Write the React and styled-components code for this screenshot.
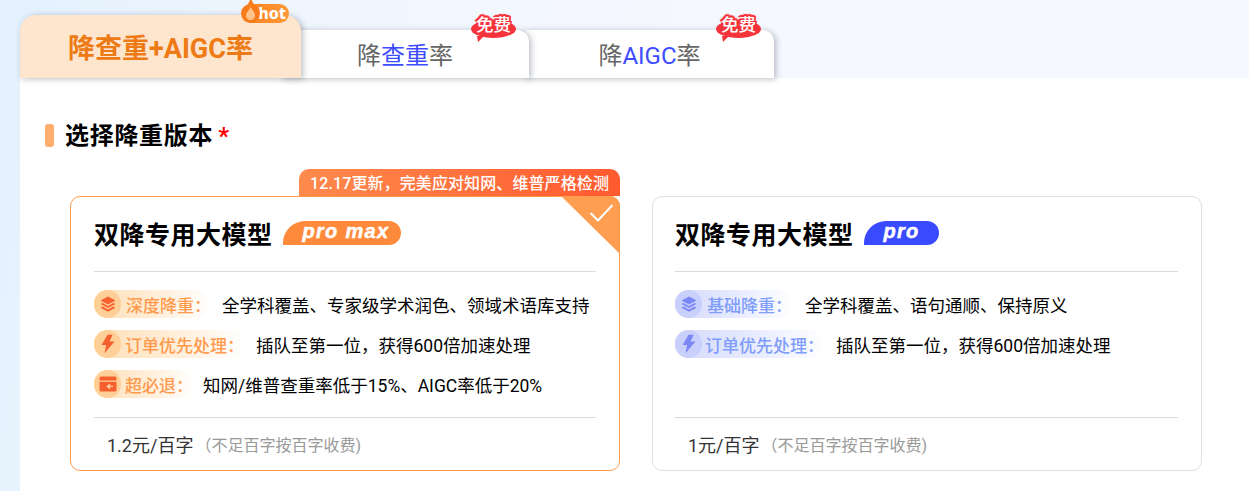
import styled, { createGlobalStyle } from 'styled-components'

const Global = createGlobalStyle`
  html, body { margin: 0; padding: 0; }
  body {
    width: 1249px;
    height: 491px;
    overflow: hidden;
    font-family: Roboto, "Noto Sans CJK SC", sans-serif;
  }
`

const Page = styled.div`
  width: 1249px;
  height: 491px;
  overflow: hidden;
  background: linear-gradient(100deg, #e3f1fd 0%, #f1f6fe 25%, #f6f8ff 60%, #f6f8ff 100%);
`

const TabBar = styled.div`
  height: 78px;
  padding-left: 20px;
  display: flex;
  align-items: flex-end;
`

const Tab = styled.div`
  position: relative;
  height: ${p => (p.$active ? 63 : 48)}px;
  width: ${p => p.$w}px;
  margin-left: ${p => p.$back || 0}px;
  padding-top: ${p => (p.$active ? 6 : 4)}px;
  box-sizing: border-box;
  display: flex;
  align-items: center;
  justify-content: center;
  font-size: ${p => (p.$active ? 27 : 24)}px;
  line-height: 1;
  color: ${p => (p.$active ? '#ee7a16' : '#666')};
  font-weight: ${p => (p.$active ? 700 : 400)};
  background: ${p => (p.$active ? '#fde6cd' : '#fff')};
  border-radius: ${p => (p.$active ? '16px 16px 0 0' : '0 12px 0 0')};
  box-shadow: 2px 1px 6px rgba(40, 50, 70, 0.32);
  z-index: ${p => p.$z};
`

const Hl = styled.span`
  color: #3d4cff;
`

const HotBadge = styled.div`
  position: absolute;
  top: -11px;
  right: 12px;
  width: 47px;
  height: 19px;
  border-radius: 10px;
  background: linear-gradient(90deg, #f97c1c, #ff9a3a);
  color: #fff;
  font: 800 16px/18px "Noto Sans", sans-serif;
  text-align: right;
  padding-right: 3px;
  box-sizing: border-box;
`

const FlameIcon = styled.svg`
  position: absolute;
  left: -1px;
  top: -8px;
  width: 19px;
  height: 27px;
`

const FreeBadge = styled.div`
  position: absolute;
  top: -10px;
  right: 13px;
  width: 45px;
  height: 18px;
  border-radius: 50%;
  background: #f5333a;
  &::after {
    content: '';
    position: absolute;
    left: 6px;
    bottom: -4px;
    width: 0;
    height: 0;
    border-left: 1px solid transparent;
    border-right: 6px solid transparent;
    border-top: 6px solid #f5333a;
  }
`

const FreeText = styled.span`
  position: absolute;
  left: 5px;
  top: -5px;
  color: #fff;
  font-size: 17.5px;
  font-weight: 500;
  line-height: 20px;
  white-space: nowrap;
  text-shadow: 0 -2px 0 #f5333a, 2px -1px 0 #f5333a, -2px -1px 0 #f5333a, 1px -2px 1px #f5333a, -1px -2px 1px #f5333a;
`

const Panel = styled.div`
  position: relative;
  margin-left: 20px;
  height: 413px;
  background: #fff;
  padding: 45px 0 0 25px;
  box-sizing: border-box;
`

const Heading = styled.div`
  display: flex;
  align-items: center;
  height: 24px;
  font-size: 24px;
  font-weight: 700;
  letter-spacing: 0.7px;
  color: #000;
`

const HeadingText = styled.span`
  padding-bottom: 3px;
`

const Mark = styled.i`
  width: 9px;
  height: 23px;
  border-radius: 3px;
  background: #ffae6e;
  margin-right: 11px;
`

const Star = styled.span`
  color: #f00;
  margin-left: 5px;
  font-size: 24px;
`

const Cards = styled.div`
  display: flex;
  gap: 32px;
  margin: 49px 0 0 25px;
`

const Card = styled.div`
  position: relative;
  width: 550px;
  height: 275px;
  box-sizing: border-box;
  padding: 0 23px 0 ${p => (p.$on ? 23 : 22)}px;
  border: 1px solid ${p => (p.$on ? '#ff9a4d' : '#dedede')};
  border-radius: 10px;
  background: #fff;
`

const Ribbon = styled.div`
  position: absolute;
  right: -1px;
  top: -28px;
  width: 321px;
  height: 27px;
  padding-right: 11px;
  box-sizing: border-box;
  border-radius: 10px 10px 0 0;
  background: linear-gradient(90deg, #ff8a4c, #ff5a30);
  color: #fff;
  font-size: 16px;
  font-weight: 500;
  letter-spacing: 0.1px;
  line-height: 29px;
  text-align: right;
  white-space: nowrap;
`

const Corner = styled.div`
  position: absolute;
  right: -1px;
  top: -1px;
  width: 59px;
  height: 58px;
  background: #ff9d50;
  border-top-right-radius: 10px;
  clip-path: polygon(0 0, 100% 0, 100% 100%);
`

const CheckIcon = styled.svg`
  position: absolute;
  right: 6px;
  top: 7px;
  width: 25px;
  height: 20px;
`

const TitleRow = styled.div`
  display: flex;
  align-items: center;
  height: 75px;
  box-sizing: border-box;
  border-bottom: 1px solid #dcdcdc;
  padding-top: 2px;
`

const CardTitle = styled.div`
  font-size: 25px;
  font-weight: 700;
  letter-spacing: 0.5px;
  color: #000;
  line-height: 1;
`

const ModelTag = styled.div`
  margin-left: 10px;
  margin-top: -5px;
  height: 24px;
  width: ${p => p.$w}px;
  box-sizing: border-box;
  padding-left: 20px;
  border-radius: 22px 12px 12px 0;
  background: ${p => p.$bg};
  color: #fff;
  font: italic 900 20px/21px "Liberation Sans", sans-serif;
  letter-spacing: 1.3px;
  white-space: nowrap;
  -webkit-text-stroke: 0.5px #fff;
`

const Rows = styled.div`
  height: 146px;
  box-sizing: border-box;
  padding-top: 18px;
  display: flex;
  flex-direction: column;
  gap: 12px;
  border-bottom: 1px solid #dcdcdc;
`

const Row = styled.div`
  display: flex;
  align-items: center;
  height: 28px;
`

const Pill = styled.div`
  display: flex;
  align-items: center;
  height: 28px;
  width: ${p => p.$w}px;
  margin-right: ${p => p.$gap}px;
  border-radius: 14px;
  font-size: 17px;
  font-weight: 500;
  white-space: nowrap;
  color: ${p => (p.$blue ? '#7f9dfb' : '#ff9a4d')};
  background: ${p =>
    p.$blue
      ? 'linear-gradient(90deg, #d3d9fc 0%, #ebeefe 60%, #ffffff 100%)'
      : 'linear-gradient(90deg, #ffdfb8 0%, #fff0dd 60%, #ffffff 100%)'};
`

const IconBall = styled.span`
  flex: none;
  width: 27px;
  height: 28px;
  margin-right: ${p => p.$lead}px;
  border-radius: 14px;
  display: flex;
  align-items: center;
  justify-content: center;
  background: ${p => (p.$blue ? '#c9d0fb' : '#ffcf98')};
`

const RowText = styled.div`
  font-size: 17.5px;
  color: #000;
  white-space: nowrap;
`

const Price = styled.div`
  display: flex;
  align-items: center;
  height: 52px;
  padding-left: 13px;
  font-size: 18px;
  color: #333;
  white-space: nowrap;
`

const Note = styled.span`
  font-size: 16px;
  color: #999;
  margin-left: 2px;
`

const fill = blue => (blue ? '#7c88f5' : '#f6602f')

const LayersIcon = ({ blue }) => (
  <svg width="18" height="18" viewBox="0 0 18 18">
    <path d="M9 1.5 16.5 5.5 9 9.5 1.5 5.5Z" fill={fill(blue)} />
    <path d="M3.6 8 9 10.9 14.4 8 16.5 9.1 9 13.1 1.5 9.1Z" fill={fill(blue)} />
    <path d="M3.6 11.6 9 14.5 14.4 11.6 16.5 12.7 9 16.7 1.5 12.7Z" fill={fill(blue)} />
  </svg>
)

const BoltIcon = ({ blue }) => (
  <svg width="16" height="20" viewBox="0 0 16 20">
    <path d="M7.5 0.8 1.5 11h4.6L4.5 19.2 14.5 7.5H9.6L12.6 0.8Z" fill={fill(blue)} />
  </svg>
)

const WalletIcon = () => (
  <svg width="18" height="16" viewBox="0 0 18 16">
    <path d="M2 0.5h14a1.5 1.5 0 0 1 1.5 1.5v2.5H.5V2A1.5 1.5 0 0 1 2 .5Z" fill="#f6602f" />
    <path d="M.5 5.8h17V14a1.5 1.5 0 0 1-1.5 1.5H2A1.5 1.5 0 0 1 .5 14Z" fill="#f6602f" />
    <path d="M11 8.2 8.4 10.4 11 12.6M8.8 10.4H14" stroke="#ffd39f" strokeWidth="1.4" fill="none" />
  </svg>
)

const plans = [
  {
    on: true,
    tag: 'pro max',
    tagW: 118,
    tagBg: '#ff8a3c',
    price: '1.2元/百字',
    rows: [
      { icon: <LayersIcon />, label: '深度降重：', lead: 5, w: 116, gap: 12, text: '全学科覆盖、专家级学术润色、领域术语库支持' },
      { icon: <BoltIcon />, label: '订单优先处理：', lead: 4, w: 150, gap: 12, text: '插队至第一位，获得600倍加速处理' },
      { icon: <WalletIcon />, label: '超必退：', lead: 4, w: 100, gap: 9, text: '知网/维普查重率低于15%、AIGC率低于20%' },
    ],
  },
  {
    on: false,
    tag: 'pro',
    tagW: 75,
    tagBg: '#3a4bff',
    price: '1元/百字',
    rows: [
      { icon: <LayersIcon blue />, label: '基础降重：', lead: 5, w: 118, gap: 12, text: '全学科覆盖、语句通顺、保持原义' },
      { icon: <BoltIcon blue />, label: '订单优先处理：', lead: 3, w: 150, gap: 11, text: '插队至第一位，获得600倍加速处理' },
    ],
  },
]

function PlanCard({ plan }) {
  return (
    <Card $on={plan.on}>
      {plan.on && <Ribbon>12.17更新，完美应对知网、维普严格检测</Ribbon>}
      {plan.on && (
        <Corner>
          <CheckIcon viewBox="0 0 25 20">
            <path d="M1.5 10 9 17.5 23.5 2" stroke="#fff" strokeWidth="2" fill="none" />
          </CheckIcon>
        </Corner>
      )}
      <TitleRow>
        <CardTitle>双降专用大模型</CardTitle>
        <ModelTag $w={plan.tagW} $bg={plan.tagBg}>{plan.tag}</ModelTag>
      </TitleRow>
      <Rows>
        {plan.rows.map(r => (
          <Row key={r.label}>
            <Pill $w={r.w} $gap={r.gap} $blue={!plan.on}>
              <IconBall $blue={!plan.on} $lead={r.lead}>{r.icon}</IconBall>
              {r.label}
            </Pill>
            <RowText>{r.text}</RowText>
          </Row>
        ))}
      </Rows>
      <Price>
        {plan.price}
        <Note>（不足百字按百字收费)</Note>
      </Price>
    </Card>
  )
}

export default function App() {
  return (
    <Page>
      <Global />
      <TabBar>
        <Tab $active $w={281} $z={3}>
          降查重+AIGC率
          <HotBadge>
            <FlameIcon viewBox="0 0 19 27">
              <circle cx="9.5" cy="17.5" r="9.5" fill="#f97c1c" />
              <path d="M9.5 1C10 5 14 8 15 13L9 22 4 14C5 10 9 7 9.5 1Z" fill="#f97c1c" />
              <path d="M9.5 11C11 14 14 16 14 19.5A4.5 4.5 0 0 1 5 19.5C5 16 8.5 14.5 9.5 11Z" fill="#ffc48c" />
            </FlameIcon>
            hot
          </HotBadge>
        </Tab>
        <Tab $w={248} $back={-20} $z={2}>
          降<Hl>查重</Hl>率
          <FreeBadge><FreeText>免费</FreeText></FreeBadge>
        </Tab>
        <Tab $w={249} $back={-4} $z={1}>
          降<Hl>AIGC</Hl>率
          <FreeBadge><FreeText>免费</FreeText></FreeBadge>
        </Tab>
      </TabBar>
      <Panel>
        <Heading>
          <Mark />
          <HeadingText>选择降重版本<Star>*</Star></HeadingText>
        </Heading>
        <Cards>
          {plans.map(p => (
            <PlanCard key={p.tag} plan={p} />
          ))}
        </Cards>
      </Panel>
    </Page>
  )
}
